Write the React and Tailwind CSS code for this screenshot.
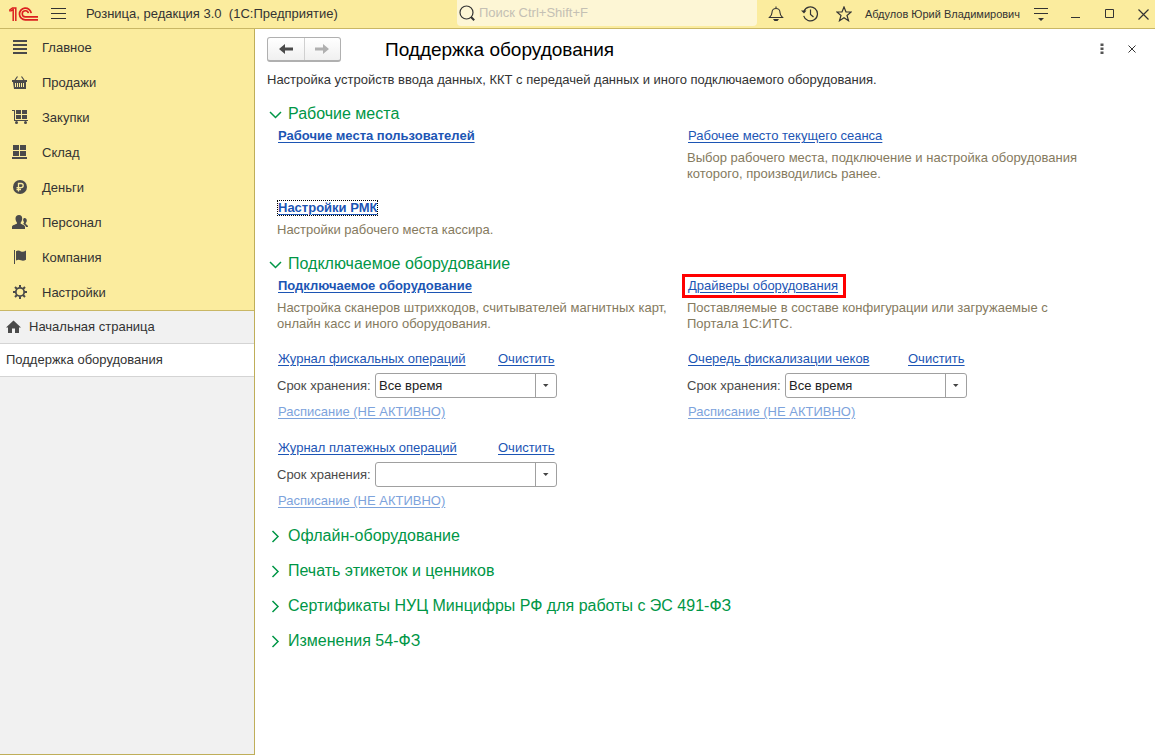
const stroke = { fill: 'none', stroke: 'currentColor' };

const Logo = () => (
  <svg width="30" height="14" viewBox="0 0 30 14" fill="none" stroke="#dc1f1f" aria-label="1С" role="img">
    <path d="M.9 4.600V2.800L3.500.9h3.300V14" strokeWidth="1.500" />
    <path d="M1.500 4.200 4.200 2.600V14" strokeWidth="1.500" />
    <path d="M22.200 6.200A5.900 5.900 0 1 0 16.300 12.900H29" strokeWidth="1.700" />
    <path d="M19.400 6.200A3.100 3.100 0 1 0 16.300 9.900H29" strokeWidth="1.600" />
  </svg>
);

const icons = {
  list: (
    <svg width="16" height="16" viewBox="0 0 16 16" fill="currentColor">
      <path d="M1 0h14v2H1zM1 4h14v2H1zM1 8h14v2H1zM1 12h14v2H1z" />
    </svg>
  ),
  basket: (
    <svg width="16" height="16" viewBox="0 0 16 16">
      <path d="M0 5h15v2H0z" fill="currentColor" />
      <path fillRule="evenodd" d="M1 7h13v7H2zM3 8v4h1V8zM5 8v4h1V8zM7 8v4h1V8zM9 8v4h1V8zM11 8v4h1V8z" fill="currentColor" />
      <path d="M3 5l2.500-3.500M12 5L9.500 1.500" {...stroke} strokeWidth="1.200" />
    </svg>
  ),
  cart: (
    <svg width="16" height="16" viewBox="0 0 16 16" fill="currentColor">
      <path d="M0 0h3v10h13v1H2V1H0zM4 0h5v4H4zM10 0h5v4h-5zM4 5h5v4H4zM10 5h5v4h-5z" />
      <circle cx="4.500" cy="12.500" r="1.500" />
      <circle cx="13.500" cy="12.500" r="1.500" />
    </svg>
  ),
  store: (
    <svg width="16" height="16" viewBox="0 0 16 16" fill="currentColor">
      <path d="M1 0h6v5H1zM8 0h6v5H8zM1 6h6v5H1zM8 6h6v5H8zM0 12h15v2H0z" />
    </svg>
  ),
  ruble: (
    <svg width="16" height="16" viewBox="0 0 16 16">
      <circle cx="8" cy="7" r="7" fill="currentColor" />
      <path d="M6.500 11.500V3.500h2.600a2 2 0 0 1 0 4.200H4.500M4.500 9.500H9" fill="none" stroke="#fbec9e" strokeWidth="1.300" />
    </svg>
  ),
  people: (
    <svg width="16" height="16" viewBox="0 0 16 16" fill="currentColor">
      <path d="M7 0c2.200 0 3.200 1.400 3.200 3.500 0 1.700-.7 3.200-1.500 4v1.200c1.500.9 4.300 1.300 4.300 3.300v2H0v-2c0-2 3.300-2.400 4.900-3.300V7.500C4.200 6.700 3.500 5.200 3.500 3.500 3.500 1.400 4.800 0 7 0z" />
      <path d="M12.500 3c1.500 0 2.300 1 2.300 2.500 0 1-.5 2-1.100 2.600v.9c.9.6 2.300.9 2.300 3h-2c-.3-1.500-1.600-2.200-2.900-2.900.8-1 1.200-1.700.6-2.500-.7-.9-.9-3.600.8-3.600z" />
    </svg>
  ),
  flag: (
    <svg width="16" height="16" viewBox="0 0 16 16" fill="currentColor">
      <path d="M2 0h1v14H2zM4 1.200c2-1.300 3.500-.4 5 .2 1.500.5 3 .3 5-.9v9.200c-2 1.100-3.500 1.200-5 .5-1.500-.6-3-.9-5 .2z" />
    </svg>
  ),
  gear: (
    <svg width="16" height="16" viewBox="0 0 16 16">
      <circle cx="8" cy="7" r="4.200" {...stroke} strokeWidth="1.800" />
      <path d="M8 0v2.500M8 11.500V14M1 7h2.500M12.500 7H15M3 2l2 2M11 10l2 2M13 2l-2 2M5 10l-2 2" {...stroke} strokeWidth="2" />
    </svg>
  ),
};

const menu = [
  ['Главное', 'list'],
  ['Продажи', 'basket'],
  ['Закупки', 'cart'],
  ['Склад', 'store'],
  ['Деньги', 'ruble'],
  ['Персонал', 'people'],
  ['Компания', 'flag'],
  ['Настройки', 'gear'],
];

function IconButton({ label, children }) {
  return (
    <button type="button" aria-label={label} className="flex h-7 w-[34px] shrink-0 items-center justify-center">
      {children}
    </button>
  );
}

function TopBar() {
  return (
    <header className="flex h-[29px] shrink-0 items-start border-b border-[#c9b765] bg-[#fbec9e] text-[#333]">
      <div className="flex h-7 min-w-0 flex-1 items-center pl-[9px]">
        <Logo />
        <button type="button" aria-label="Меню функций" className="ml-3 mr-5 shrink-0">
          <svg width="15" height="12" viewBox="0 0 15 12" {...stroke}>
            <path d="M0 .5h15M0 5.500h15M0 10.500h15" />
          </svg>
        </button>
        <span className="truncate whitespace-pre">Розница, редакция 3.0  (1С:Предприятие)</span>
      </div>
      <label className="flex h-[26px] w-[300px] shrink-0 items-center gap-1 rounded-b-sm bg-[#fdf6d5] pl-[2px]">
        <svg width="16" height="18" viewBox="0 0 16 18" {...stroke}>
          <circle cx="7.500" cy="8.500" r="6.500" strokeWidth="1.200" />
          <path d="M12 13l3.200 3.200" strokeWidth="2" />
        </svg>
        <input
          type="search"
          aria-label="Поиск"
          placeholder="Поиск Ctrl+Shift+F"
          className="min-w-0 flex-1 bg-transparent outline-none placeholder:text-[#c4c0b4]"
        />
      </label>
      <div className="ml-[2px] flex shrink-0 items-center">
        <IconButton label="Уведомления">
          <svg width="16" height="16" viewBox="0 0 16 16" {...stroke}>
            <path d="M1.500 11.500h13c-1.500-1.500-2.500-2.500-2.500-5C12 4 10.500 2.500 8 2.500S4 4 4 6.500c0 2.500-1 3.500-2.500 5zM8 .5v2" strokeWidth="1.100" />
            <path d="M5 13h6l-1.500 2h-3z" fill="currentColor" stroke="none" />
          </svg>
        </IconButton>
        <IconButton label="История">
          <svg width="18" height="16" viewBox="0 0 18 16" {...stroke}>
            <path d="M3 5.200a7 7 0 1 1-.3 4.600M9.500 3.500v5l3 2.500" strokeWidth="1.200" />
            <path d="M0 4.500h5.500L3 7.500z" fill="currentColor" stroke="none" />
          </svg>
        </IconButton>
        <IconButton label="Избранное">
          <svg width="16" height="16" viewBox="0 0 16 16" {...stroke}>
            <path d="M8 1l2 5h5.200L11 9.500l1.500 5.200L8 11.700l-4.500 3L5 9.500.8 6H6z" strokeWidth="1.200" />
          </svg>
        </IconButton>
        <button type="button" className="mx-1 whitespace-nowrap text-[11px]">Абдулов Юрий Владимирович</button>
        <IconButton label="Сервис и настройки">
          <svg width="14" height="14" viewBox="0 0 14 14" {...stroke}>
            <path d="M0 1.500h14M0 6.500h14" />
            <path d="M4 11h6l-3 3z" fill="currentColor" stroke="none" />
          </svg>
        </IconButton>
        <IconButton label="Свернуть">
          <svg width="10" height="10" viewBox="0 0 10 10" {...stroke}><path d="M1 8.500h9" /></svg>
        </IconButton>
        <IconButton label="Развернуть">
          <svg width="10" height="10" viewBox="0 0 10 10" {...stroke}><path d="M1.500.5h8v8h-8z" /></svg>
        </IconButton>
        <button type="button" aria-label="Закрыть приложение" className="flex h-7 w-[29px] items-center justify-end pr-[6px]">
          <svg width="11" height="11" viewBox="0 0 11 11" {...stroke}><path d="M.5.5l10 10M10.500.5l-10 10" strokeWidth="1.200" /></svg>
        </button>
      </div>
    </header>
  );
}

function Sidebar() {
  return (
    <aside className="flex w-[255px] shrink-0 flex-col border-r border-b border-[#bfae59] bg-[#f1f1f1] text-[#333]">
      <nav className="border-b border-[#c9b765] bg-[#fbec9e] pt-px">
        {menu.map(([label, icon]) => (
          <a key={label} href="#" className="flex h-[35px] items-center gap-[14px] pl-3">
            <span className="text-[#4a4a4a]">{icons[icon]}</span>
            {label}
          </a>
        ))}
      </nav>
      <a href="#" className="flex h-[33px] items-center gap-2 border-b border-[#d4d4d4] pl-[6px]">
        <svg width="15" height="14" viewBox="0 0 15 14" fill="#4a4a4a">
          <path d="M7.500.5 15 7.500h-2V13H9V8.500H6V13H2V7.500H0z" />
        </svg>
        Начальная страница
      </a>
      <a href="#" className="flex h-[33px] items-center border-b border-[#d4d4d4] bg-white pl-[6px]">Поддержка оборудования</a>
    </aside>
  );
}

function Section({ title, open = false, children }) {
  return (
    <section>
      <h2 className="text-[16px] leading-[22px] text-[#009646]">
        <button type="button" aria-expanded={open} className="flex items-center gap-[6px] pl-[2px]">
          <svg width="13" height="13" viewBox="0 0 13 13" {...stroke} strokeWidth="1.500">
            <path d={open ? 'M1 4l5.500 5.500L12 4' : 'M3.500 1l5.500 5.500L3.500 12'} />
          </svg>
          {title}
        </button>
      </h2>
      {children}
    </section>
  );
}

function Link({ bold, muted, children }) {
  return (
    <a
      href="#"
      className={`ml-px underline underline-offset-2 ${bold ? 'font-bold' : ''} ${muted ? 'text-[#7da3dc]' : 'text-[#1c55b4]'}`}
    >
      {children}
    </a>
  );
}

function LinkNote({ link, note }) {
  return (
    <div className="flex flex-col items-start gap-[6px] pr-4">
      {link}
      {note && <p className="text-[#857a5e]">{note}</p>}
    </div>
  );
}

function Journal({ id, title, value }) {
  return (
    <div className="flex flex-col items-start gap-[6px] pb-px">
      <div className="grid grid-cols-[220px_auto]">
        <div><Link>{title}</Link></div>
        <div><Link>Очистить</Link></div>
      </div>
      <div className="flex items-center">
        <label htmlFor={id} className="w-[98px] text-[#4a4a4a]">Срок хранения:</label>
        <div className="relative">
          <select
            id={id}
            defaultValue={value}
            className="block h-[25px] w-[182px] appearance-none rounded-[3px] border border-[#a0a0a0] bg-white pl-[3px] text-[#222]"
          >
            <option value="" />
            <option>Все время</option>
          </select>
          <span className="pointer-events-none absolute inset-y-0 right-0 flex w-[22px] items-center justify-center border-l border-[#a0a0a0]">
            <svg width="7" height="4" viewBox="0 0 7 4" fill="#444"><path d="M0 0h5.500L2.750 3z" /></svg>
          </span>
        </div>
      </div>
      <Link muted>Расписание (НЕ АКТИВНО)</Link>
    </div>
  );
}

function Main() {
  return (
    <main className="min-w-0 flex-1 pt-2 pl-3 text-[#333]">
      <div className="flex h-[25px] items-center">
        <div className="flex h-[25px] w-[74px] rounded-[3px] border border-b-2 border-[#b0b0b0] bg-gradient-to-b from-white to-[#f0f0f0]">
          <button type="button" aria-label="Назад" className="flex flex-1 items-center justify-center border-r border-[#d0d0d0]">
            <svg width="14" height="12" viewBox="0 0 14 12" fill="#4a4a4a"><path d="M0 6l6-5v3.500h8v3H6V11z" /></svg>
          </button>
          <button type="button" aria-label="Вперед" className="flex flex-1 items-center justify-center">
            <svg width="14" height="12" viewBox="0 0 14 12" fill="#b0b0b0"><path d="M14 6L8 1v3.500H0v3h8V11z" /></svg>
          </button>
        </div>
        <h1 className="ml-11 flex-1 text-[19px] text-black">Поддержка оборудования</h1>
        <button type="button" aria-label="Ещё" className="flex w-[30px] justify-center pb-[2px]">
          <svg width="4" height="12" viewBox="0 0 4 12" fill="#555"><path d="M.5.5h3v2.500h-3zM.5 4.500h3v2.500h-3zM.5 8.500h3v2.500h-3z" /></svg>
        </button>
        <button type="button" aria-label="Закрыть" className="mr-2 flex w-[30px] justify-center pb-[2px]">
          <svg width="8" height="8" viewBox="0 0 8 8" {...stroke}><path d="M.5.5l7 7M7.500.5l-7 7" /></svg>
        </button>
      </div>
      <p className="mt-[10px]">
        Настройка устройств ввода данных, ККТ с передачей данных и иного подключаемого оборудования.
      </p>
      <div className="mt-[15px] flex flex-col gap-[13px]">
        <Section title="Рабочие места" open>
          <div className="mt-[3px] grid max-w-[830px] grid-cols-2 gap-y-[18px] pb-[2px] pl-[10px]">
            <LinkNote link={<Link bold>Рабочие места пользователей</Link>} />
            <LinkNote
              link={<Link>Рабочее место текущего сеанса</Link>}
              note="Выбор рабочего места, подключение и настройка оборудования которого, производились ранее."
            />
            <LinkNote
              link={<span className="pr-px outline-1 -outline-offset-1 outline-dotted outline-black"><Link bold>Настройки РМК</Link></span>}
              note="Настройки рабочего места кассира."
            />
          </div>
        </Section>
        <Section title="Подключаемое оборудование" open>
          <div className="mt-[3px] grid max-w-[830px] grid-cols-2 gap-y-[19px] pb-[2px] pl-[10px]">
            <LinkNote
              link={<Link bold>Подключаемое оборудование</Link>}
              note="Настройка сканеров штрихкодов, считывателей магнитных карт, онлайн касс и иного оборудования."
            />
            <LinkNote
              link={
                <span className="relative">
                  <Link>Драйверы оборудования</Link>
                  <span className="pointer-events-none absolute -top-1 -right-2 -bottom-1 -left-[5px] border-3 border-[#f00]" />
                </span>
              }
              note="Поставляемые в составе конфигурации или загружаемые с Портала 1С:ИТС."
            />
            <Journal id="fiscal" title="Журнал фискальных операций" value="Все время" />
            <Journal id="queue" title="Очередь фискализации чеков" value="Все время" />
            <Journal id="payment" title="Журнал платежных операций" value="" />
          </div>
        </Section>
        <Section title="Офлайн-оборудование" />
        <Section title="Печать этикеток и ценников" />
        <Section title="Сертификаты НУЦ Минцифры РФ для работы с ЭС 491-ФЗ" />
        <Section title="Изменения 54-ФЗ" />
      </div>
    </main>
  );
}

export default function App() {
  return (
    <div className="flex min-h-screen flex-col bg-white font-['Liberation_Sans',Arial,sans-serif] text-[13px] leading-4">
      <TopBar />
      <div className="flex flex-1">
        <Sidebar />
        <Main />
      </div>
    </div>
  );
}
